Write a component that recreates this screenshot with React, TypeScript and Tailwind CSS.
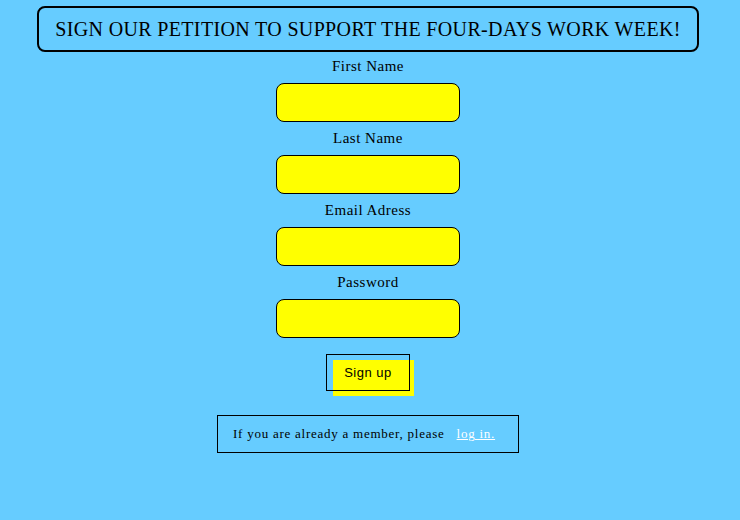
export default function App() {
  const labelCls = "text-[15px] leading-[18px] tracking-[0.5px] text-black";
  const inputCls = "mt-[8px] mb-[7px] h-[39px] w-[184px] rounded-[8px] border border-black bg-[#ffff00] outline-none";
  const fields = ["First Name", "Last Name", "Email Adress", "Password"];
  return (
    <div className="w-[740px] h-[520px] bg-[#66ccff]">
      <div
        className="w-[736px] flex flex-col items-center pt-[6px]"
        style={{ fontFamily: '"Liberation Serif", "Times New Roman", serif' }}
      >
        <div className="w-[662px] h-[46px] rounded-[8px] border-2 border-black flex items-center justify-center">
          <h1 className="text-[20px] tracking-[0.35px] text-black">SIGN OUR PETITION TO SUPPORT THE FOUR-DAYS WORK WEEK!</h1>
        </div>
        <div className="flex flex-col items-center mt-[5px]">
          {fields.map((f) => (
            <div key={f} className="flex flex-col items-center">
              <label className={labelCls}>{f}</label>
              <input className={inputCls} type={f === "Password" ? "password" : "text"} />
            </div>
          ))}
        </div>
        <div className="relative mt-[9px] ml-[4px] w-[88px] h-[42px]">
          <div className="absolute left-[7px] top-[6px] w-[81px] h-[36px] bg-[#ffff00]" />
          <button
            className="absolute left-0 top-0 w-[84px] h-[37px] border border-black text-[13px] tracking-[0.5px] text-black flex items-center justify-center"
            style={{ fontFamily: '"Liberation Sans", Arial, sans-serif' }}
          >
            Sign up
          </button>
        </div>
        <div className="mt-[19px] w-[302px] h-[38px] border border-black flex items-center pl-[15px]">
          <span className="text-[13px] tracking-[0.75px] text-black">If you are already a member, please</span>
          <a href="#" className="ml-[12px] text-[13px] tracking-[0.75px] text-white underline">log in.</a>
        </div>
      </div>
    </div>
  );
}
